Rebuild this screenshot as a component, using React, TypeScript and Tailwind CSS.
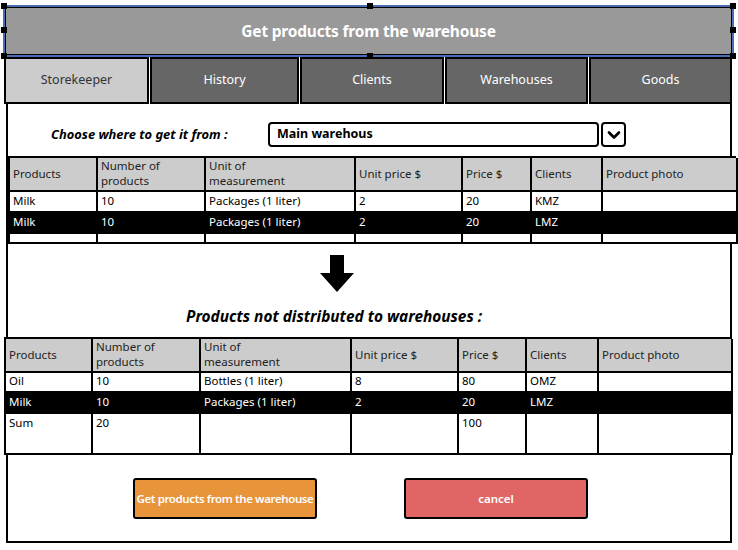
import React from 'react';
import { ChevronDown } from 'lucide-react';

type Cell = string | string[];

interface SketchTableProps {
  cols: string;
  width: string;
  headerH: string;
  rows: { cells: string[]; h: string; dark?: boolean }[];
}

const headers: Cell[] = [
  'Products',
  ['Number of', 'products'],
  ['Unit of', 'measurement'],
  'Unit price $',
  'Price $',
  'Clients',
  'Product photo',
];

const SketchTable = ({ cols, width, headerH, rows }: SketchTableProps) => (
  <div className={`${width} border-l-2 border-t-2 border-black text-[11.5px] leading-[15px]`}>
    <div className={`grid ${cols} ${headerH} bg-[#cccccc]`}>
      {headers.map((h, i) => (
        <div key={i} className="flex flex-col justify-center border-r-2 border-b-2 border-black px-[3px] pb-[2px] text-[#222]">
          {Array.isArray(h) ? h.map((l) => <span key={l}>{l}</span>) : <span>{h}</span>}
        </div>
      ))}
    </div>
    {rows.map((r, ri) => (
      <div key={ri} className={`grid ${cols} ${r.h} ${r.dark ? 'bg-black text-white' : 'bg-white text-black'}`}>
        {r.cells.map((c, ci) => (
          <div key={ci} className="border-r-2 border-b-2 border-black px-[3px] pt-[1px] truncate">
            {c}
          </div>
        ))}
      </div>
    ))}
  </div>
);

const Handle = ({ pos }: { pos: string }) => (
  <span className={`absolute h-[6px] w-[6px] bg-black ${pos}`} />
);

const tabs = ['Storekeeper', 'History', 'Clients', 'Warehouses', 'Goods'];
const tabW = ['w-[145px]', 'w-[149px]', 'w-[144px]', 'w-[143px]', 'w-[143px]'];

export default function App() {
  return (
    <div className="relative h-[550px] w-[738px] overflow-hidden bg-white font-['Noto_Sans','Segoe_UI',sans-serif] text-black">
      {/* title bar, shown selected */}
      <div className="relative ml-[3px] mt-[5px] h-[52px] w-[731px] border-2 border-[#4a6cb3]">
        <div className="flex h-full items-center justify-center border border-black bg-[#999999] pt-[2px] text-[15.5px] font-bold tracking-[-0.2px] text-white">
          Get products from the warehouse
        </div>
        <Handle pos="-left-[4px] -top-[4px]" />
        <Handle pos="left-[362px] -top-[4px]" />
        <Handle pos="-right-[4px] -top-[4px]" />
        <Handle pos="-left-[4px] top-[20px]" />
        <Handle pos="-right-[4px] top-[20px]" />
        <Handle pos="-left-[4px] -bottom-[4px]" />
        <Handle pos="left-[362px] -bottom-[4px]" />
        <Handle pos="-right-[4px] -bottom-[4px]" />
      </div>

      {/* tabs */}
      <div className="ml-[4px] flex h-[47px] gap-[1px] text-[12.5px]">
        {tabs.map((t, i) => (
          <div
            key={t}
            className={`${tabW[i]} flex items-center justify-center border-2 border-black ${
              i === 0 ? 'bg-[#cccccc] text-[#333]' : 'bg-[#666666] text-white'
            }`}
          >
            {t}
          </div>
        ))}
      </div>

      {/* main panel */}
      <div className="ml-[6px] h-[439px] w-[726px] border-2 border-t-0 border-black">
        <div className="flex items-center pt-[18px]">
          <div className="w-[260px] pl-[43px] text-[12.9px] font-bold italic">Choose where to get it from :</div>
          <div className="flex h-[25px] w-[331px] items-center rounded-[4px] border-2 border-black pl-[7px] text-[12.5px] font-bold">
            Main warehous
          </div>
          <div className="ml-[2px] flex h-[25px] w-[25px] items-center justify-center rounded-[4px] border-2 border-black">
            <ChevronDown size={20} strokeWidth={3.2} />
          </div>
        </div>

        <div className="mt-[9px]">
          <SketchTable
            width="w-[728px]"
            cols="grid-cols-[88px_108px_150px_107px_69px_71px_135px]"
            headerH="h-[34px]"
            rows={[
              { cells: ['Milk', '10', 'Packages (1 liter)', '2', '20', 'KMZ', ''], h: 'h-[21px]' },
              { cells: ['Milk', '10', 'Packages (1 liter)', '2', '20', 'LMZ', ''], h: 'h-[21px]', dark: true },
              { cells: ['', '', '', '', '', '', ''], h: 'h-[10px]' },
            ]}
          />
        </div>

        <div className="ml-[311px] mt-[11px]">
          <svg width="36" height="38" viewBox="0 0 36 38">
            <polygon points="11,0 25,0 25,18 35,18 18,37 1,18 11,18" fill="#000" />
          </svg>
        </div>

        <div className="ml-[178px] mt-[15px] text-[15.4px] font-bold italic leading-[18px]">
          Products not distributed to warehouses :
        </div>

        <div className="-ml-[4px] mt-[11px]">
          <SketchTable
            width="w-[727px]"
            cols="grid-cols-[87px_108px_151px_107px_68px_72px_134px]"
            headerH="h-[33px]"
            rows={[
              { cells: ['Oil', '10', 'Bottles (1 liter)', '8', '80', 'OMZ', ''], h: 'h-[21px]' },
              { cells: ['Milk', '10', 'Packages (1 liter)', '2', '20', 'LMZ', ''], h: 'h-[21px]', dark: true },
              { cells: ['Sum', '20', '', '', '100', '', ''], h: 'h-[41px]' },
            ]}
          />
        </div>

        <div className="ml-[125px] mt-[23px] flex gap-[87px]">
          <button className="flex h-[41px] w-[184px] items-center justify-center rounded-[3px] border-2 border-black bg-[#e8943a] text-[11.5px] font-semibold tracking-[-0.4px] text-white">
            Get products from the warehouse
          </button>
          <button className="flex h-[41px] w-[184px] items-center justify-center rounded-[3px] border-2 border-black bg-[#e06666] text-[11.5px] font-semibold text-white">
            cancel
          </button>
        </div>
      </div>
    </div>
  );
}
